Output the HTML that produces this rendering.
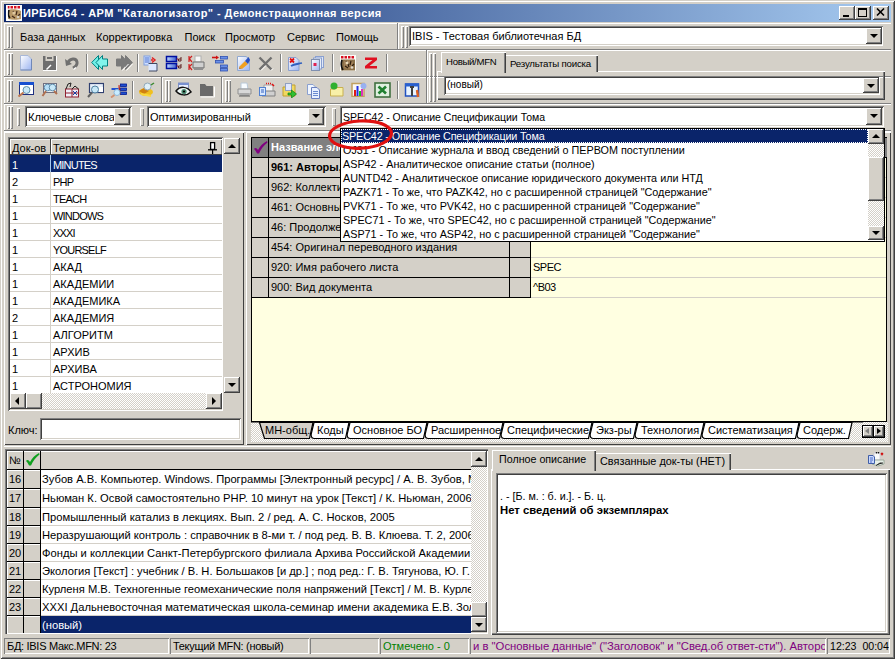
<!DOCTYPE html><html><head><meta charset="utf-8"><style>
*{box-sizing:border-box}
html,body{margin:0;padding:0}
body{width:895px;height:659px;overflow:hidden;background:#D4D0C8;font-family:"Liberation Sans",sans-serif;font-size:11px;position:relative;color:#000}
.a{position:absolute}
.t{white-space:pre;line-height:1;-webkit-font-smoothing:antialiased}
.rz{box-shadow:inset -1px -1px #404040,inset 1px 1px #fff,inset -2px -2px #808080,inset 2px 2px #D4D0C8;background:#D4D0C8}
.sk{box-shadow:inset 1px 1px #808080,inset -1px -1px #fff,inset 2px 2px #404040,inset -2px -2px #D4D0C8;background:#fff}
.tr{box-shadow:inset 1px 1px #fff,inset -1px -1px #808080}
.ts{box-shadow:inset 1px 1px #808080,inset -1px -1px #fff}
.dith{background:repeating-conic-gradient(#fff 0 25%,#D4D0C8 0 50%) 0 0/2px 2px}
.grip{width:3px;box-shadow:inset 1px 1px #fff,inset -1px -1px #808080}
.vsep{width:2px;border-left:1px solid #808080;border-right:1px solid #fff}
.hline{height:2px;border-top:1px solid #808080;border-bottom:1px solid #fff}
.ls{letter-spacing:-0.8px}.arr{width:0;height:0;border-left:4px solid transparent;border-right:4px solid transparent;border-top:4px solid #000}.arru{width:0;height:0;border-left:4px solid transparent;border-right:4px solid transparent;border-bottom:4px solid #000}.arrl{width:0;height:0;border-top:4px solid transparent;border-bottom:4px solid transparent;border-right:4px solid #000}.arrr{width:0;height:0;border-top:4px solid transparent;border-bottom:4px solid transparent;border-left:4px solid #000}</style></head><body><div class="a " style="left:0px;top:0px;width:895px;height:659px;box-shadow:inset 1px 1px #D4D0C8,inset -1px -1px #404040,inset 2px 2px #fff,inset -2px -2px #808080"></div>
<div class="a " style="left:4px;top:4px;width:887px;height:18px;background:linear-gradient(to right,#0A246A,#A6CAF0)"></div>
<svg class="a" style="left:6px;top:5px" width="16" height="16" viewBox="0 0 16 16"><rect x="0" y="0" width="16" height="16" fill="#fbfbf8"/><path d="M1 1h2.5v2.5h-2.5zM4.5 1h2.5v2.5h-2.5zM8 1h2.5v2.5h-2.5zM11.5 1h2.5v2.5h-2.5z" fill="#d81020"/><path d="M2 5 C4 4,12 4,15 6 L15 14 C12 15,6 15,2 14Z" fill="#b89868"/><path d="M3 5 C2 8,2 11,4 13" stroke="#101010" stroke-width="1.6" fill="none"/><path d="M7 6 L9 9 M11 6 L10 10 M6 11 L9 13 M12 11 L14 9" stroke="#402818" stroke-width="1.2"/><circle cx="8" cy="8" r="1.6" fill="#e0c8a0"/><circle cx="12" cy="12" r="1.3" fill="#d8d0c0"/><path d="M1 1 V15 H3" stroke="#fff" stroke-width="1.5" fill="none"/></svg>
<div class="a t " style="left:23px;top:7.69px;font-size:11px;color:#fff;font-weight:bold;letter-spacing:0.42px">ИРБИС64 - АРМ &quot;Каталогизатор&quot; - Демонстрационная версия</div>
<div class="a rz" style="left:839px;top:6px;width:16px;height:14px;"></div>
<div class="a rz" style="left:855px;top:6px;width:16px;height:14px;"></div>
<div class="a rz" style="left:873px;top:6px;width:16px;height:14px;"></div>
<div class="a" style="left:843px;top:15px;width:6px;height:2px;background:#000"></div>
<div class="a" style="left:858px;top:8px;width:9px;height:9px;border:1px solid #000;border-top-width:2px"></div>
<svg class="a" style="left:876px;top:8px" width="10" height="9" viewBox="0 0 10 9"><path d="M1 0.5 L8 7.5 M8 0.5 L1 7.5" stroke="#000" stroke-width="1.6"/></svg>
<div class="a" style="left:4px;top:23px;width:887px;height:1px;background:#fff"></div>
<div class="a" style="left:4px;top:49px;width:887px;height:2px;border-top:1px solid #808080;border-bottom:1px solid #fff"></div>
<div class="a" style="left:4px;top:76px;width:887px;height:2px;border-top:1px solid #808080;border-bottom:1px solid #fff"></div>
<div class="a" style="left:4px;top:103px;width:887px;height:2px;border-top:1px solid #808080;border-bottom:1px solid #fff"></div>
<div class="a" style="left:4px;top:130px;width:887px;height:2px;border-top:1px solid #808080;border-bottom:1px solid #fff"></div>
<div class="a" style="left:4px;top:24px;width:1px;height:25px;background:#fff"></div>
<div class="a" style="left:4px;top:51px;width:1px;height:25px;background:#fff"></div>
<div class="a" style="left:4px;top:78px;width:1px;height:25px;background:#fff"></div>
<div class="a" style="left:4px;top:105px;width:1px;height:25px;background:#fff"></div>
<div class="a" style="left:397px;top:23px;width:2px;height:26px;border-left:1px solid #808080;border-right:1px solid #fff"></div>
<div class="a" style="left:426px;top:50px;width:2px;height:26px;border-left:1px solid #808080;border-right:1px solid #fff"></div>
<div class="a" style="left:426px;top:77px;width:2px;height:26px;border-left:1px solid #808080;border-right:1px solid #fff"></div>
<div class="a grip" style="left:7px;top:26px;width:3px;height:22px;"></div>
<div class="a grip" style="left:10px;top:26px;width:3px;height:22px;"></div>
<div class="a t " style="left:20px;top:31.69px;font-size:11px;">База данных</div>
<div class="a t " style="left:96px;top:31.69px;font-size:11px;">Корректировка</div>
<div class="a t " style="left:184.5px;top:31.69px;font-size:11px;">Поиск</div>
<div class="a t " style="left:225px;top:31.69px;font-size:11px;">Просмотр</div>
<div class="a t " style="left:287px;top:31.69px;font-size:11px;">Сервис</div>
<div class="a t " style="left:336px;top:31.69px;font-size:11px;">Помощь</div>
<div class="a grip" style="left:401px;top:26px;width:3px;height:22px;"></div>
<div class="a grip" style="left:405px;top:26px;width:3px;height:22px;"></div>
<div class="a sk" style="left:409px;top:26px;width:474px;height:20px;"></div>
<div class="a t " style="left:412px;top:31.19px;font-size:11px;">IBIS - Тестовая библиотечная БД</div>
<div class="a rz" style="left:866px;top:28px;width:16px;height:16px;"></div>
<div class="a arr" style="left:870px;top:34px"></div>
<div class="a grip" style="left:7px;top:53px;width:3px;height:22px;"></div>
<div class="a grip" style="left:10px;top:53px;width:3px;height:22px;"></div>
<div class="a grip" style="left:7px;top:80px;width:3px;height:22px;"></div>
<div class="a grip" style="left:10px;top:80px;width:3px;height:22px;"></div>
<svg width="0" height="0" style="position:absolute"><defs><linearGradient id="pg" x1="0" y1="0" x2="1" y2="1"><stop offset="0" stop-color="#ffffff"/><stop offset="1" stop-color="#9cb4f0"/></linearGradient><linearGradient id="bb" x1="0" y1="0" x2="1" y2="0"><stop offset="0" stop-color="#c0d8ff"/><stop offset="1" stop-color="#4060d0"/></linearGradient></defs></svg>
<svg class="a" style="left:19px;top:54px" width="14" height="17" viewBox="0 0 14 17"><path d="M1.5 1.5 H9 L12.5 5 V16 H1.5Z" fill="url(#pg)" stroke="#a8b8d8"/><path d="M12.5 5 V16 H1.5" stroke="#7088b8" fill="none"/></svg>
<svg class="a" style="left:42px;top:55px" width="15" height="16" viewBox="0 0 15 16"><rect x="1" y="1" width="13" height="14" fill="#6e6e6e"/><rect x="3.5" y="1" width="8" height="5" fill="#d4d0c8"/><rect x="5" y="2" width="5" height="2" fill="#6e6e6e"/><path d="M4.5 14.5 L9 10" stroke="#fff" stroke-width="1.5"/><path d="M1 15.5 H15 M14.5 1 V16" stroke="#fff"/></svg>
<svg class="a" style="left:64px;top:55px" width="16" height="16" viewBox="0 0 16 16"><path d="M4 7.5 C6 3.5,12 2.5,13 7 C13.5 10,11 12,9 13" stroke="#707070" stroke-width="3" fill="none"/><path d="M1 4 L2 11 L8 9Z" fill="#707070"/><path d="M9.5 14.5 L12 12.5" stroke="#fff" stroke-width="1.3"/></svg>
<svg class="a" style="left:91px;top:54px" width="18" height="17" viewBox="0 0 18 17"><path d="M0.7 8.5 L7.5 1.5 V15.5Z" fill="#70f0e8" stroke="#008080"/><path d="M5 8.5 L11.5 1.5 V5 H16.5 V12 H11.5 V15.5Z" fill="#80f4ec" stroke="#008080"/></svg>
<svg class="a" style="left:115px;top:54px" width="18" height="17" viewBox="0 0 18 17"><path d="M17.3 8.5 L10.5 1.5 V15.5Z" fill="#7a7a7a" stroke="#7a7a7a"/><path d="M13 8.5 L6.5 1.5 V5 H1.5 V12 H6.5 V15.5Z" fill="#7a7a7a" stroke="#7a7a7a"/><path d="M7.5 16.5 L13.5 10 M11.5 16.5 L17.5 10" stroke="#fff"/></svg>
<svg class="a" style="left:143px;top:55px" width="15" height="17" viewBox="0 0 15 17"><rect x="1" y="1" width="6" height="9" fill="#d0e0ff" stroke="#80a0e0"/><path d="M2 3h4M2 5h4M2 7h4" stroke="#4a70d0"/><path d="M9 2.5 L12 5 L9 7.5 M10 5 H8" stroke="#e02020" stroke-width="1.5" fill="none"/><rect x="5.5" y="8.5" width="9" height="7.5" fill="#dce8ff"/><path d="M5.5 8.5 H14 V16 H6" stroke="#404860" fill="none"/></svg>
<svg class="a" style="left:165px;top:55px" width="18" height="15" viewBox="0 0 18 15"><rect x="1.5" y="1.5" width="10" height="5" fill="url(#bb)" stroke="#0010a0" stroke-width="1.5"/><rect x="1.5" y="8.5" width="10" height="5" fill="url(#bb)" stroke="#0010a0" stroke-width="1.5"/><path d="M11.5 4 H13 M11.5 11 H13" stroke="#a02020"/><path d="M16 2 V6 H13.5 V4 H16 M16 9 V13 H13.5 V11 H16" stroke="#602020" fill="none"/></svg>
<svg class="a" style="left:188px;top:55px" width="17" height="16" viewBox="0 0 17 16"><path d="M1 1 V7 M1 4 L4 1 M1.5 4 L4 7 M1 9 V15 M1 12 L4 9 M1.5 12 L4 15" stroke="#d02020" stroke-width="1.2" fill="none"/><rect x="7" y="1" width="6" height="6" fill="#f8f8f8" stroke="#b0b0b0"/><path d="M5 7 H16 V13 H5Z" fill="#d0d0d0" stroke="#707070"/><rect x="6" y="12" width="9" height="3" fill="#909090"/></svg>
<svg class="a" style="left:211px;top:55px" width="17" height="17" viewBox="0 0 17 17"><path d="M1 2.5 H6" stroke="#d01010" stroke-width="1.6"/><path d="M5 0.5 L8 2.5 L5 4.5Z" fill="#d01010"/><rect x="9.5" y="1.5" width="7" height="2.5" fill="#6a90e8" stroke="#3050b0" stroke-width="0.8"/><rect x="4.5" y="5.5" width="8" height="2.5" fill="#6a90e8" stroke="#3050b0" stroke-width="0.8"/><rect x="9.5" y="10" width="7" height="2.5" fill="#6a90e8" stroke="#3050b0" stroke-width="0.8"/><rect x="9.5" y="13.5" width="7" height="2.5" fill="#6a90e8" stroke="#3050b0" stroke-width="0.8"/></svg>
<svg class="a" style="left:236px;top:55px" width="15" height="16" viewBox="0 0 15 16"><path d="M1.5 1.5 H10 L13.5 4 V15.5 H1.5Z" fill="url(#pg)" stroke="#90a8d0"/><path d="M3 12 L9 6 L12 9 L6 14Z" fill="#f0a020"/><path d="M3 12 L6 14 L3 14Z" fill="#c08040"/><path d="M9 6 L12.5 2 L14 5 L12 9Z" fill="#2850c0"/></svg>
<svg class="a" style="left:258px;top:56px" width="16" height="15" viewBox="0 0 16 15"><path d="M1.5 1.5 L13.5 13.5 M13.5 1.5 L1.5 13.5" stroke="#707070" stroke-width="2.4"/><path d="M3 14.5 L8 9.5 M13 14.5 L15 12.5" stroke="#fff"/></svg>
<svg class="a" style="left:287px;top:55px" width="16" height="16" viewBox="0 0 16 16"><path d="M1.5 2.5 H9 L12 5.5 V15.5 H1.5Z" fill="url(#pg)" stroke="#8aa0d0"/><path d="M3 3.5 L7 7.5 M7 3.5 L3 7.5" stroke="#e01010" stroke-width="1.8"/><path d="M4 11 C7 9,11 9,15 8" stroke="#3060c0" stroke-width="1.8" fill="none"/></svg>
<svg class="a" style="left:310px;top:55px" width="14" height="16" viewBox="0 0 14 16"><rect x="5.5" y="1.5" width="8" height="11" fill="#e0e8f8" stroke="#8aa0d0"/><rect x="3.5" y="3" width="8" height="11" fill="#e8eef8" stroke="#8aa0d0"/><rect x="1.5" y="4.5" width="8" height="11" fill="url(#pg)" stroke="#8090b0"/><rect x="3.5" y="8" width="3" height="3" fill="#e02050"/></svg>
<svg class="a" style="left:340px;top:55px" width="16" height="16" viewBox="0 0 16 16"><rect x="0" y="0" width="16" height="16" fill="#fbfbf8"/><path d="M1 1h2.5v2.5h-2.5zM4.5 1h2.5v2.5h-2.5zM8 1h2.5v2.5h-2.5zM11.5 1h2.5v2.5h-2.5z" fill="#d81020"/><path d="M1 4.5 H15 V15.5 H1Z" fill="#8a7048"/><path d="M4 6 C6 5,10 5,13 7 L13 13 C11 14,7 14,4 13Z" fill="#a08058"/><path d="M2 5 C1 8,1 12,3 15" stroke="#101010" stroke-width="1.6" fill="none"/><path d="M6 6 L8 9 M11 6 L10 10 M5 11 L8 13 M12 11 L14 9 M8 9 L9 12" stroke="#302010" stroke-width="1.2"/><circle cx="7" cy="8" r="1.4" fill="#e8d8b8"/><circle cx="12" cy="12.5" r="1.3" fill="#e0d8c8"/></svg>
<svg class="a" style="left:364px;top:57px" width="14" height="12" viewBox="0 0 14 12"><path d="M1 0.5 H13 V3 L5.5 9 H13 V11.5 H1 V9 L8.5 3 H1Z" fill="#e01020"/></svg>
<svg class="a" style="left:17px;top:81px" width="17" height="16" viewBox="0 0 17 16"><rect x="2.5" y="1.5" width="14" height="12" fill="#fff" stroke="#203080"/><rect x="2" y="1" width="15" height="3" fill="#1850d0"/><circle cx="9.5" cy="9" r="3.5" fill="#c8e8f8" stroke="#6090a8"/><path d="M6.5 11.5 L1.5 15.5" stroke="#c07850" stroke-width="2.2"/></svg>
<svg class="a" style="left:41px;top:82px" width="17" height="15" viewBox="0 0 17 15"><rect x="2.5" y="1.5" width="13" height="9" fill="#e8eef0" stroke="#707080"/><circle cx="6.5" cy="5.5" r="3.3" fill="#b8e0f8" stroke="#6090b0"/><circle cx="11.5" cy="5.5" r="3.3" fill="#c8e8f8" stroke="#6090b0"/><path d="M5 9 L1.5 14 M13 9 L16 12" stroke="#b07050" stroke-width="2"/></svg>
<svg class="a" style="left:64px;top:82px" width="16" height="16" viewBox="0 0 16 16"><rect x="1.5" y="7" width="13" height="8" fill="#f0f0f8" stroke="#902030"/><path d="M1.5 11 H14.5 M8 7 V15" stroke="#902030"/><path d="M2 7 L4 2 L7 1 L6 5" stroke="#202020" fill="none"/><path d="M8 7 L11 4 L14.5 7" stroke="#202020" fill="none"/><path d="M9 9 L13 13 M13 9 L9 13" stroke="#2040a0"/></svg>
<svg class="a" style="left:87px;top:82px" width="17" height="16" viewBox="0 0 17 16"><rect x="2.5" y="1.5" width="14" height="9" fill="#e8f0fb" stroke="#304070" stroke-width="1.2"/><rect x="12" y="5" width="4" height="5" fill="#fff"/><circle cx="8" cy="7.5" r="3.5" fill="#c8e8f8" stroke="#5080a0"/><path d="M5 10.5 L1 15" stroke="#606060" stroke-width="2"/></svg>
<svg class="a" style="left:109px;top:83px" width="18" height="15" viewBox="0 0 18 15"><rect x="11.5" y="1" width="6" height="2.5" fill="#2050d0" stroke="#001890" stroke-width="0.8"/><rect x="11.5" y="5" width="6" height="2.5" fill="#2050d0" stroke="#001890" stroke-width="0.8"/><rect x="11.5" y="9" width="6" height="2.5" fill="#2050d0" stroke="#001890" stroke-width="0.8"/><path d="M10 2 V10.5 H11.5 M10 6 H11.5" stroke="#d02020"/><rect x="2.5" y="5" width="7" height="2" fill="#2050d0"/><circle cx="8" cy="9.5" r="3" fill="#c8ecff" stroke="#90b8d8"/><path d="M5.5 12 L2 14.5" stroke="#d09070" stroke-width="1.8"/></svg>
<svg class="a" style="left:137px;top:82px" width="18" height="15" viewBox="0 0 18 15"><ellipse cx="9" cy="10" rx="7" ry="4" fill="#f0c020"/><path d="M2 9 L7 6 L12 9 L7 12Z" fill="#d08010"/><path d="M4 12 L14 14" stroke="#f8d840" stroke-width="2"/><circle cx="10.5" cy="4.5" r="3.5" fill="#e0f0f8" stroke="#90a8b8"/><path d="M14 3 L17 1" stroke="#3a8a30" stroke-width="1.5"/></svg>
<svg class="a" style="left:175px;top:82px" width="17" height="16" viewBox="0 0 17 16"><rect x="3.5" y="1" width="10" height="7" fill="#e8eeff" stroke="#8090c0"/><rect x="3.5" y="1" width="10" height="2" fill="#7890d0"/><path d="M1 9 C5 4,12 4,16 10 C12 14,5 14,1 9Z" fill="#f0f8f8" stroke="#101010" stroke-width="1.5"/><circle cx="9" cy="9.5" r="2.6" fill="#4a8a70"/><circle cx="9" cy="9.5" r="1.1" fill="#000"/></svg>
<svg class="a" style="left:199px;top:82px" width="16" height="16" viewBox="0 0 16 16"><path d="M1 2 H6 L7.5 4 H14 V14 H1Z" fill="#6a6a6a"/><path d="M1.5 15 H15.5 V4.5" stroke="#fff" fill="none"/></svg>
<svg class="a" style="left:237px;top:82px" width="15" height="16" viewBox="0 0 15 16"><path d="M4 1 H10 L11 7 H4Z" fill="#f8fcff" stroke="#b8c8d8"/><path d="M1 7 H14 V12 H1Z" fill="#d8d8d8" stroke="#909090"/><rect x="3" y="11" width="9" height="3" fill="#a8a8a8"/><path d="M2 14 H13" stroke="#606060"/></svg>
<svg class="a" style="left:258px;top:82px" width="18" height="16" viewBox="0 0 18 16"><path d="M6 3 H15 V13 H6Z" fill="#f0f0f0" stroke="#a0a0a0"/><path d="M4 9 H17 V14 H4Z" fill="#d0d0d0" stroke="#808080"/><rect x="1.5" y="5.5" width="6" height="8" fill="#d8e8ff" stroke="#5080d0"/><path d="M3 8h3M3 10h3" stroke="#3060c0"/><path d="M8 1.5h1M10 1.5h1M12 1.5h1M14 2 L16 4" stroke="#e01010" stroke-width="1.5"/></svg>
<svg class="a" style="left:282px;top:82px" width="15" height="16" viewBox="0 0 15 16"><path d="M1 5 H5 L6 3 H13 V14 H1Z" fill="#f0d860" stroke="#c0a030"/><rect x="3.5" y="1.5" width="6" height="7" fill="#e0e8ff" stroke="#90a0c0"/><path d="M6 11 H9.5 V8 L14.5 12 L9.5 16 V13 H6Z" fill="#30c030" stroke="#108010" stroke-width="0.7"/></svg>
<svg class="a" style="left:306px;top:83px" width="15" height="16" viewBox="0 0 15 16"><path d="M1.5 1.5 H7 L9 3.5 V11.5 H1.5Z" fill="#f0f6ff" stroke="#8aa0d0"/><path d="M5.5 4.5 H11 L13.5 7 V15.5 H5.5Z" fill="#e8f0ff" stroke="#6a80c0"/><path d="M7 8.5h5M7 10.5h5M7 12.5h5" stroke="#6a8ad0"/></svg>
<svg class="a" style="left:329px;top:82px" width="15" height="15" viewBox="0 0 15 15"><path d="M1.5 7 H6 L7 5.5 H14 V14 H1.5Z" fill="#f8f0a8" stroke="#c8b050"/><circle cx="5" cy="4" r="3.5" fill="#30b030"/></svg>
<svg class="a" style="left:351px;top:82px" width="16" height="15" viewBox="0 0 16 15"><rect x="1" y="1.5" width="12" height="13" fill="#f8f8f8" stroke="#c0a060" stroke-width="1.5"/><rect x="3" y="8" width="2" height="6" fill="#e01818"/><rect x="5.5" y="4" width="2" height="10" fill="#2030e0"/><rect x="8" y="9" width="2" height="5" fill="#20c020"/><rect x="10" y="7" width="2" height="7" fill="#e030c0"/><circle cx="12.5" cy="4" r="3" fill="#98b0f0"/></svg>
<svg class="a" style="left:374px;top:82px" width="17" height="16" viewBox="0 0 17 16"><rect x="1" y="1" width="15" height="14" fill="#e0f0e0" stroke="#407040" stroke-width="1.6"/><path d="M4.5 4.5 L12 11.5 M12 4.5 L4.5 11.5" stroke="#208030" stroke-width="2.6"/></svg>
<svg class="a" style="left:404px;top:82px" width="17" height="16" viewBox="0 0 17 16"><rect x="1.5" y="2" width="13" height="12" fill="#e8f4ff" stroke="#2050c0" stroke-width="1.5"/><rect x="1" y="1.5" width="14" height="3" fill="#2860d0"/><path d="M6 5 H10 M8 5 V14" stroke="#404040" stroke-width="2"/><path d="M13 8 L14 15" stroke="#e06020" stroke-width="2.4"/></svg>
<div class="a vsep" style="left:86px;top:54px;width:2px;height:18px;"></div>
<div class="a vsep" style="left:137px;top:54px;width:2px;height:18px;"></div>
<div class="a vsep" style="left:280px;top:54px;width:2px;height:18px;"></div>
<div class="a vsep" style="left:332px;top:54px;width:2px;height:18px;"></div>
<div class="a vsep" style="left:386px;top:54px;width:2px;height:18px;"></div>
<div class="a vsep" style="left:132px;top:81px;width:2px;height:18px;"></div>
<div class="a" style="left:161px;top:77px;width:2px;height:26px;border-left:1px solid #808080;border-right:1px solid #fff"></div>
<div class="a grip" style="left:165px;top:80px;width:3px;height:22px;"></div>
<div class="a grip" style="left:168px;top:80px;width:3px;height:22px;"></div>
<div class="a" style="left:221px;top:77px;width:2px;height:26px;border-left:1px solid #808080;border-right:1px solid #fff"></div>
<div class="a grip" style="left:225px;top:80px;width:3px;height:22px;"></div>
<div class="a grip" style="left:228px;top:80px;width:3px;height:22px;"></div>
<div class="a vsep" style="left:397px;top:81px;width:2px;height:18px;"></div>
<div class="a grip" style="left:429px;top:53px;width:3px;height:49px;"></div>
<div class="a grip" style="left:433px;top:53px;width:3px;height:49px;"></div>
<div class="a " style="left:437px;top:71px;width:448px;height:29px;box-shadow:inset 1px 1px #fff,inset -1px -1px #404040,inset -2px -2px #808080"></div>
<div class="a " style="left:505px;top:55px;width:93px;height:17px;box-shadow:inset 1px 1px #fff,inset -1px 0 #404040,inset -2px 0 #808080;background:#D4D0C8"></div>
<div class="a t " style="left:510px;top:59.29px;font-size:9.7px;letter-spacing:-0.2px">Результаты поиска</div>
<div class="a " style="left:441px;top:52px;width:65px;height:21px;box-shadow:inset 1px 1px #fff,inset -1px 0 #404040,inset -2px 0 #808080;background:#D4D0C8"></div>
<div class="a t " style="left:446px;top:56.87px;font-size:9.6px;letter-spacing:-0.3px">Новый/MFN</div>
<div class="a sk" style="left:444px;top:76px;width:436px;height:19px;"></div>
<div class="a t " style="left:447px;top:79.73px;font-size:10px;">(новый)</div>
<div class="a rz" style="left:863px;top:78px;width:16px;height:15px;"></div>
<div class="a arr" style="left:867px;top:84px"></div>
<div class="a grip" style="left:7px;top:106px;width:3px;height:23px;"></div>
<div class="a grip" style="left:10px;top:106px;width:3px;height:23px;"></div>
<div class="a grip" style="left:17px;top:108px;width:3px;height:18px;"></div>
<div class="a sk" style="left:25px;top:106px;width:107px;height:21px;"></div>
<div class="a t " style="left:28px;top:111.52px;font-size:11.2px;">Ключевые слова</div>
<div class="a rz" style="left:114px;top:108px;width:16px;height:17px;"></div>
<div class="a arr" style="left:118px;top:114px"></div>
<div class="a grip" style="left:140px;top:108px;width:4px;height:18px;width:4px"></div>
<div class="a sk" style="left:147px;top:106px;width:179px;height:21px;"></div>
<div class="a t " style="left:150px;top:111.69px;font-size:11px;">Оптимизированный</div>
<div class="a rz" style="left:308px;top:108px;width:16px;height:17px;"></div>
<div class="a arr" style="left:312px;top:114px"></div>
<div class="a grip" style="left:332px;top:108px;width:4px;height:18px;width:4px"></div>
<div class="a sk" style="left:340px;top:106px;width:544px;height:21px;"></div>
<div class="a t " style="left:343px;top:112.11px;font-size:10.5px;">SPEC42 - Описание Спецификации Тома</div>
<div class="a rz" style="left:866px;top:108px;width:16px;height:17px;"></div>
<div class="a arr" style="left:870px;top:114px"></div>
<div class="a " style="left:4px;top:132px;width:240px;height:313px;box-shadow:inset 1px 1px #fff,inset -1px -1px #404040"></div>
<div class="a " style="left:8px;top:137px;width:215px;height:274px;box-shadow:inset 1px 1px #808080,inset -1px -1px #fff,inset 2px 2px #404040,inset -2px -2px #D4D0C8;background:#D4D0C8"></div>
<div class="a " style="left:10px;top:139px;width:212px;height:16px;background:#D4D0C8"></div>
<div class="a tr" style="left:10px;top:139px;width:41px;height:16px;"></div>
<div class="a tr" style="left:51px;top:139px;width:171px;height:16px;"></div>
<div class="a" style="left:10px;top:154px;width:212px;height:1px;background:#404040"></div>
<div class="a" style="left:50px;top:139px;width:1px;height:16px;background:#404040"></div>
<div class="a t " style="left:12px;top:142.69px;font-size:11px;">Док-ов</div>
<div class="a t " style="left:53px;top:142.69px;font-size:11px;">Термины</div>
<svg class="a" style="left:207px;top:141px" width="11" height="14" viewBox="0 0 11 14"><rect x="3.6" y="1.6" width="4" height="6.8" fill="#fff" stroke="#000" stroke-width="1.3"/><path d="M1 8.8 H10" stroke="#000" stroke-width="1.3"/><path d="M5.6 8.8 V13" stroke="#000" stroke-width="1.2"/></svg>
<div class="a " style="left:10px;top:155px;width:212px;height:17px;background:#0A246A"></div>
<div class="a" style="left:50px;top:155px;width:1px;height:17px;background:#A6CAF0"></div>
<div class="a t " style="left:12px;top:159.99px;font-size:11px;color:#fff">1</div>
<div class="a t ls" style="left:53px;top:159.99px;font-size:11px;color:#fff">MINUTES</div>
<div class="a " style="left:10px;top:172px;width:212px;height:17px;background:#fff"></div>
<div class="a" style="left:50px;top:172px;width:1px;height:17px;background:#D4D0C8"></div>
<div class="a t " style="left:12px;top:176.99px;font-size:11px;">2</div>
<div class="a t ls" style="left:53px;top:176.99px;font-size:11px;">PHP</div>
<div class="a " style="left:10px;top:189px;width:212px;height:17px;background:#fff"></div>
<div class="a" style="left:10px;top:189px;width:212px;height:1px;background:#D4D0C8"></div>
<div class="a" style="left:50px;top:189px;width:1px;height:17px;background:#D4D0C8"></div>
<div class="a t " style="left:12px;top:193.99px;font-size:11px;">1</div>
<div class="a t ls" style="left:53px;top:193.99px;font-size:11px;">TEACH</div>
<div class="a " style="left:10px;top:206px;width:212px;height:17px;background:#fff"></div>
<div class="a" style="left:10px;top:206px;width:212px;height:1px;background:#D4D0C8"></div>
<div class="a" style="left:50px;top:206px;width:1px;height:17px;background:#D4D0C8"></div>
<div class="a t " style="left:12px;top:210.99px;font-size:11px;">1</div>
<div class="a t ls" style="left:53px;top:210.99px;font-size:11px;">WINDOWS</div>
<div class="a " style="left:10px;top:223px;width:212px;height:17px;background:#fff"></div>
<div class="a" style="left:10px;top:223px;width:212px;height:1px;background:#D4D0C8"></div>
<div class="a" style="left:50px;top:223px;width:1px;height:17px;background:#D4D0C8"></div>
<div class="a t " style="left:12px;top:227.99px;font-size:11px;">1</div>
<div class="a t ls" style="left:53px;top:227.99px;font-size:11px;">XXXI</div>
<div class="a " style="left:10px;top:240px;width:212px;height:17px;background:#fff"></div>
<div class="a" style="left:10px;top:240px;width:212px;height:1px;background:#D4D0C8"></div>
<div class="a" style="left:50px;top:240px;width:1px;height:17px;background:#D4D0C8"></div>
<div class="a t " style="left:12px;top:244.99px;font-size:11px;">1</div>
<div class="a t ls" style="left:53px;top:244.99px;font-size:11px;">YOURSELF</div>
<div class="a " style="left:10px;top:257px;width:212px;height:17px;background:#fff"></div>
<div class="a" style="left:10px;top:257px;width:212px;height:1px;background:#D4D0C8"></div>
<div class="a" style="left:50px;top:257px;width:1px;height:17px;background:#D4D0C8"></div>
<div class="a t " style="left:12px;top:261.99px;font-size:11px;">1</div>
<div class="a t " style="left:53px;top:261.99px;font-size:11px;">АКАД</div>
<div class="a " style="left:10px;top:274px;width:212px;height:17px;background:#fff"></div>
<div class="a" style="left:10px;top:274px;width:212px;height:1px;background:#D4D0C8"></div>
<div class="a" style="left:50px;top:274px;width:1px;height:17px;background:#D4D0C8"></div>
<div class="a t " style="left:12px;top:278.99px;font-size:11px;">1</div>
<div class="a t " style="left:53px;top:278.99px;font-size:11px;">АКАДЕМИИ</div>
<div class="a " style="left:10px;top:291px;width:212px;height:17px;background:#fff"></div>
<div class="a" style="left:10px;top:291px;width:212px;height:1px;background:#D4D0C8"></div>
<div class="a" style="left:50px;top:291px;width:1px;height:17px;background:#D4D0C8"></div>
<div class="a t " style="left:12px;top:295.99px;font-size:11px;">1</div>
<div class="a t " style="left:53px;top:295.99px;font-size:11px;">АКАДЕМИКА</div>
<div class="a " style="left:10px;top:308px;width:212px;height:17px;background:#fff"></div>
<div class="a" style="left:10px;top:308px;width:212px;height:1px;background:#D4D0C8"></div>
<div class="a" style="left:50px;top:308px;width:1px;height:17px;background:#D4D0C8"></div>
<div class="a t " style="left:12px;top:312.99px;font-size:11px;">2</div>
<div class="a t " style="left:53px;top:312.99px;font-size:11px;">АКАДЕМИЯ</div>
<div class="a " style="left:10px;top:325px;width:212px;height:17px;background:#fff"></div>
<div class="a" style="left:10px;top:325px;width:212px;height:1px;background:#D4D0C8"></div>
<div class="a" style="left:50px;top:325px;width:1px;height:17px;background:#D4D0C8"></div>
<div class="a t " style="left:12px;top:329.99px;font-size:11px;">1</div>
<div class="a t " style="left:53px;top:329.99px;font-size:11px;">АЛГОРИТМ</div>
<div class="a " style="left:10px;top:342px;width:212px;height:17px;background:#fff"></div>
<div class="a" style="left:10px;top:342px;width:212px;height:1px;background:#D4D0C8"></div>
<div class="a" style="left:50px;top:342px;width:1px;height:17px;background:#D4D0C8"></div>
<div class="a t " style="left:12px;top:346.99px;font-size:11px;">1</div>
<div class="a t " style="left:53px;top:346.99px;font-size:11px;">АРХИВ</div>
<div class="a " style="left:10px;top:359px;width:212px;height:17px;background:#fff"></div>
<div class="a" style="left:10px;top:359px;width:212px;height:1px;background:#D4D0C8"></div>
<div class="a" style="left:50px;top:359px;width:1px;height:17px;background:#D4D0C8"></div>
<div class="a t " style="left:12px;top:363.99px;font-size:11px;">1</div>
<div class="a t " style="left:53px;top:363.99px;font-size:11px;">АРХИВА</div>
<div class="a " style="left:10px;top:376px;width:212px;height:17px;background:#fff"></div>
<div class="a" style="left:10px;top:376px;width:212px;height:1px;background:#D4D0C8"></div>
<div class="a" style="left:50px;top:376px;width:1px;height:17px;background:#D4D0C8"></div>
<div class="a t " style="left:12px;top:380.99px;font-size:11px;">1</div>
<div class="a t " style="left:53px;top:380.99px;font-size:11px;">АСТРОНОМИЯ</div>
<div class="a rz" style="left:224px;top:138px;width:16px;height:16px;"></div>
<div class="a arru" style="left:228px;top:144px"></div>
<div class="a rz" style="left:224px;top:377px;width:16px;height:16px;"></div>
<div class="a arr" style="left:228px;top:383px"></div>
<div class="a dith" style="left:10px;top:393px;width:212px;height:16px;"></div>
<div class="a rz" style="left:10px;top:393px;width:16px;height:16px;"></div>
<div class="a arrl" style="left:15px;top:397px"></div>
<div class="a rz" style="left:26px;top:393px;width:16px;height:16px;"></div>
<div class="a rz" style="left:206px;top:393px;width:16px;height:16px;"></div>
<div class="a arrr" style="left:212px;top:397px"></div>
<div class="a t " style="left:8px;top:424.69px;font-size:11px;">Ключ:</div>
<div class="a sk" style="left:40px;top:418px;width:201px;height:22px;"></div>
<div class="a " style="left:246px;top:132px;width:645px;height:313px;box-shadow:inset 1px 1px #fff,inset -1px -1px #404040"></div>
<div class="a " style="left:251px;top:137px;width:636px;height:285px;background:#FFFFE1;border:1px solid #000"></div>
<div class="a dith" style="left:251px;top:422px;width:637px;height:20px;"></div>
<div class="a " style="left:252px;top:138px;width:635px;height:20px;background:#808080"></div>
<div class="a" style="left:252px;top:157px;width:635px;height:1px;background:#000"></div>
<svg class="a" style="left:253px;top:140px" width="15" height="15" viewBox="0 0 15 15"><path d="M1 9 C2 7,4 8,5 10 C7 6,10 3,14 1 L14.5 2.5 C11 5,8 9,6 13.5 L4 13.5 C3 11,2 10,1 9Z" fill="#800080"/></svg>
<div class="a t " style="left:271px;top:142.19px;font-size:11px;color:#fff;font-weight:bold">Название элемента</div>
<div class="a " style="left:252px;top:158px;width:278px;height:20px;background:#D4D0C8"></div>
<div class="a" style="left:252px;top:177px;width:278px;height:1px;background:#000"></div>
<div class="a" style="left:531px;top:177px;width:355px;height:1px;background:#D4D0C8"></div>
<div class="a t " style="left:271px;top:161.99px;font-size:11px;font-weight:bold">961: Авторы, Редакторы</div>
<div class="a " style="left:252px;top:178px;width:278px;height:20px;background:#D4D0C8"></div>
<div class="a" style="left:252px;top:197px;width:278px;height:1px;background:#000"></div>
<div class="a" style="left:531px;top:197px;width:355px;height:1px;background:#D4D0C8"></div>
<div class="a t " style="left:271px;top:181.99px;font-size:11px;">962: Коллективы</div>
<div class="a " style="left:252px;top:198px;width:278px;height:20px;background:#D4D0C8"></div>
<div class="a" style="left:252px;top:217px;width:278px;height:1px;background:#000"></div>
<div class="a" style="left:531px;top:217px;width:355px;height:1px;background:#D4D0C8"></div>
<div class="a t " style="left:271px;top:201.99px;font-size:11px;">461: Основные сведения</div>
<div class="a " style="left:252px;top:218px;width:278px;height:20px;background:#D4D0C8"></div>
<div class="a" style="left:252px;top:237px;width:278px;height:1px;background:#000"></div>
<div class="a" style="left:531px;top:237px;width:355px;height:1px;background:#D4D0C8"></div>
<div class="a t " style="left:271px;top:221.99px;font-size:11px;">46: Продолжение</div>
<div class="a " style="left:252px;top:238px;width:278px;height:20px;background:#D4D0C8"></div>
<div class="a" style="left:252px;top:257px;width:278px;height:1px;background:#000"></div>
<div class="a" style="left:531px;top:257px;width:355px;height:1px;background:#D4D0C8"></div>
<div class="a t " style="left:271px;top:241.99px;font-size:11px;">454: Оригинал переводного издания</div>
<div class="a " style="left:252px;top:258px;width:278px;height:20px;background:#D4D0C8"></div>
<div class="a" style="left:252px;top:277px;width:278px;height:1px;background:#000"></div>
<div class="a" style="left:531px;top:277px;width:355px;height:1px;background:#D4D0C8"></div>
<div class="a t " style="left:271px;top:261.99px;font-size:11px;">920: Имя рабочего листа</div>
<div class="a t " style="left:533px;top:261.99px;font-size:11px;letter-spacing:-0.5px">SPEC</div>
<div class="a " style="left:252px;top:278px;width:278px;height:20px;background:#D4D0C8"></div>
<div class="a" style="left:252px;top:297px;width:278px;height:1px;background:#000"></div>
<div class="a" style="left:531px;top:297px;width:355px;height:1px;background:#D4D0C8"></div>
<div class="a t " style="left:271px;top:281.99px;font-size:11px;">900: Вид документа</div>
<div class="a t " style="left:533px;top:281.99px;font-size:11px;letter-spacing:-0.5px">^B03</div>
<div class="a" style="left:268px;top:138px;width:1px;height:160px;background:#000"></div>
<div class="a" style="left:509px;top:138px;width:1px;height:160px;background:#000"></div>
<div class="a" style="left:530px;top:138px;width:1px;height:160px;background:#000"></div>
<svg class="a" style="left:250px;top:420px" width="620" height="22" viewBox="0 0 620 22"><rect x="1" y="1.5" width="612" height="1" fill="#000"/><path d="M550 2.5 L547.2 14 Q546.7 18.5 550.5 18.5 L598.5 18.5 L602 2.5Z" fill="#fff" stroke="#000" stroke-width="1.2"/><path d="M455 2.5 L452.2 14 Q451.7 18.5 455.5 18.5 L545.5 18.5 L549 2.5Z" fill="#fff" stroke="#000" stroke-width="1.2"/><path d="M388 2.5 L385.2 14 Q384.7 18.5 388.5 18.5 L450.5 18.5 L454 2.5Z" fill="#fff" stroke="#000" stroke-width="1.2"/><path d="M343 2.5 L340.2 14 Q339.7 18.5 343.5 18.5 L383.5 18.5 L387 2.5Z" fill="#fff" stroke="#000" stroke-width="1.2"/><path d="M254 2.5 L251.2 14 Q250.7 18.5 254.5 18.5 L338.5 18.5 L342 2.5Z" fill="#fff" stroke="#000" stroke-width="1.2"/><path d="M178 2.5 L175.2 14 Q174.7 18.5 178.5 18.5 L249.5 18.5 L253 2.5Z" fill="#fff" stroke="#000" stroke-width="1.2"/><path d="M100 2.5 L97.2 14 Q96.7 18.5 100.5 18.5 L173.5 18.5 L177 2.5Z" fill="#fff" stroke="#000" stroke-width="1.2"/><path d="M64 2.5 L61.2 14 Q60.7 18.5 64.5 18.5 L95.5 18.5 L99 2.5Z" fill="#fff" stroke="#000" stroke-width="1.2"/><path d="M9.5 2.5 L14.5 18.5 L59.5 18.5 L63 2.5Z" fill="#D4D0C8" stroke="#000" stroke-width="1.2"/></svg>
<div class="a t " style="left:265px;top:425.29px;font-size:11px;">МН-общ.</div>
<div class="a t " style="left:317px;top:425.29px;font-size:11px;">Коды</div>
<div class="a t " style="left:353px;top:425.29px;font-size:11px;">Основное БО</div>
<div class="a t " style="left:431px;top:425.29px;font-size:11px;">Расширенное</div>
<div class="a t " style="left:507px;top:425.29px;font-size:11px;">Специфические</div>
<div class="a t " style="left:596px;top:425.29px;font-size:11px;">Экз-ры</div>
<div class="a t " style="left:641px;top:425.29px;font-size:11px;">Технология</div>
<div class="a t " style="left:708px;top:425.29px;font-size:11px;">Систематизация</div>
<div class="a t " style="left:803px;top:425.29px;font-size:11px;">Содерж.</div>
<div class="a " style="left:862px;top:425px;width:23px;height:13px;background:#000"></div>
<div class="a rz" style="left:863px;top:426px;width:10px;height:11px;"></div>
<div class="a" style="left:865px;top:428px;width:0;height:0;border-top:3px solid transparent;border-bottom:3px solid transparent;border-right:4px solid #808080"></div>
<div class="a rz" style="left:874px;top:426px;width:10px;height:11px;"></div>
<div class="a" style="left:877px;top:428px;width:0;height:0;border-top:3px solid transparent;border-bottom:3px solid transparent;border-left:4px solid #000"></div>
<div class="a " style="left:340px;top:128px;width:545px;height:114px;background:#fff;border:1px solid #000"></div>
<div class="a " style="left:341px;top:129px;width:527px;height:14px;background:#0A246A;outline:1px dotted #fff;outline-offset:-1px"></div>
<div class="a t " style="left:342px;top:130.86px;font-size:10.8px;color:#fff;letter-spacing:-0.15px">SPEC42 - Описание Спецификации Тома</div>
<div class="a t " style="left:343px;top:144.86px;font-size:10.8px;">OJ31 - Описание журнала и ввод сведений о ПЕРВОМ поступлении</div>
<div class="a t " style="left:343px;top:158.86px;font-size:10.8px;">ASP42 - Аналитическое описание статьи (полное)</div>
<div class="a t " style="left:343px;top:172.86px;font-size:10.8px;">AUNTD42 - Аналитическое описание юридического документа или НТД</div>
<div class="a t " style="left:343px;top:186.86px;font-size:10.8px;">PAZK71 - То же, что PAZK42, но с расширенной страницей &quot;Содержание&quot;</div>
<div class="a t " style="left:343px;top:200.86px;font-size:10.8px;">PVK71 - То же, что PVK42, но с расширенной страницей &quot;Содержание&quot;</div>
<div class="a t " style="left:343px;top:214.86px;font-size:10.8px;">SPEC71 - То же, что SPEC42, но с расширенной страницей &quot;Содержание&quot;</div>
<div class="a t " style="left:343px;top:228.86px;font-size:10.8px;">ASP71 - То же, что ASP42, но с расширенной страницей &quot;Содержание&quot;</div>
<div class="a dith" style="left:868px;top:129px;width:16px;height:111px;"></div>
<div class="a rz" style="left:868px;top:129px;width:16px;height:15px;"></div>
<div class="a arru" style="left:872px;top:134px"></div>
<div class="a rz" style="left:868px;top:157px;width:16px;height:44px;"></div>
<div class="a rz" style="left:868px;top:226px;width:16px;height:14px;"></div>
<div class="a arr" style="left:872px;top:231px"></div>
<svg class="a" style="left:325px;top:116px" width="72" height="38" viewBox="0 0 72 38"><ellipse cx="35.5" cy="18.6" rx="31" ry="13.6" fill="none" stroke="#e01010" stroke-width="3.2" transform="rotate(-3 35.5 18.6)"/></svg>
<div class="a" style="left:4px;top:446px;width:887px;height:1px;background:#fff"></div>
<div class="a " style="left:5px;top:449px;width:483px;height:185px;background:#fff;box-shadow:inset 1px 1px #808080,inset 2px 2px #404040,inset -1px -1px #fff,inset -2px -2px #D4D0C8"></div>
<div class="a " style="left:7px;top:451px;width:464px;height:18px;background:#D4D0C8;box-shadow:inset 1px 1px #fff"></div>
<div class="a" style="left:7px;top:469px;width:464px;height:1px;background:#000"></div>
<div class="a t " style="left:9px;top:454.69px;font-size:11px;">№</div>
<svg class="a" style="left:25px;top:452px" width="15" height="15" viewBox="0 0 15 15"><path d="M1 9 C2 7,4 8,5 10 C7 6,10 3,14 1 L14.5 2.5 C11 5,8 9,6 13.5 L4 13.5 C3 11,2 10,1 9Z" fill="#10a020"/></svg>
<div class="a " style="left:7px;top:470px;width:33px;height:18px;background:#D4D0C8;box-shadow:inset 1px 1px #fff"></div>
<div class="a" style="left:7px;top:488px;width:34px;height:1px;background:#000"></div>
<div class="a" style="left:41px;top:488px;width:430px;height:1px;background:#D4D0C8"></div>
<div class="a t " style="left:9px;top:473.89px;font-size:11px;">16</div>
<div class="a" style="left:41px;top:470px;width:430px;height:18px;overflow:hidden"><div class="a t" style="left:1px;top:3.72px;font-size:11.2px;">Зубов А.В. Компьютер. Windows. Программы [Электронный ресурс] / А. В. Зубов, М. В. Зубова</div></div>
<div class="a " style="left:7px;top:489px;width:33px;height:18px;background:#D4D0C8;box-shadow:inset 1px 1px #fff"></div>
<div class="a" style="left:7px;top:507px;width:34px;height:1px;background:#000"></div>
<div class="a" style="left:41px;top:507px;width:430px;height:1px;background:#D4D0C8"></div>
<div class="a t " style="left:9px;top:492.89px;font-size:11px;">17</div>
<div class="a" style="left:41px;top:489px;width:430px;height:18px;overflow:hidden"><div class="a t" style="left:1px;top:3.72px;font-size:11.2px;">Ньюман К. Освой самостоятельно PHP. 10 минут на урок [Текст] / К. Ньюман, 2006. - 256 с.</div></div>
<div class="a " style="left:7px;top:508px;width:33px;height:17px;background:#D4D0C8;box-shadow:inset 1px 1px #fff"></div>
<div class="a" style="left:7px;top:525px;width:34px;height:1px;background:#000"></div>
<div class="a" style="left:41px;top:525px;width:430px;height:1px;background:#D4D0C8"></div>
<div class="a t " style="left:9px;top:511.89px;font-size:11px;">18</div>
<div class="a" style="left:41px;top:508px;width:430px;height:17px;overflow:hidden"><div class="a t" style="left:1px;top:3.72px;font-size:11.2px;">Промышленный катализ в лекциях. Вып. 2 / ред. А. С. Носков, 2005</div></div>
<div class="a " style="left:7px;top:526px;width:33px;height:17px;background:#D4D0C8;box-shadow:inset 1px 1px #fff"></div>
<div class="a" style="left:7px;top:543px;width:34px;height:1px;background:#000"></div>
<div class="a" style="left:41px;top:543px;width:430px;height:1px;background:#D4D0C8"></div>
<div class="a t " style="left:9px;top:529.89px;font-size:11px;">19</div>
<div class="a" style="left:41px;top:526px;width:430px;height:17px;overflow:hidden"><div class="a t" style="left:1px;top:3.72px;font-size:11.2px;">Неразрушающий контроль : справочник в 8-ми т. / под ред. В. В. Клюева. Т. 2, 2006. - 688 с.</div></div>
<div class="a " style="left:7px;top:544px;width:33px;height:17px;background:#D4D0C8;box-shadow:inset 1px 1px #fff"></div>
<div class="a" style="left:7px;top:561px;width:34px;height:1px;background:#000"></div>
<div class="a" style="left:41px;top:561px;width:430px;height:1px;background:#D4D0C8"></div>
<div class="a t " style="left:9px;top:547.89px;font-size:11px;">20</div>
<div class="a" style="left:41px;top:544px;width:430px;height:17px;overflow:hidden"><div class="a t" style="left:1px;top:3.72px;font-size:11.2px;">Фонды и коллекции Санкт-Петербургского филиала Архива Российской Академии наук</div></div>
<div class="a " style="left:7px;top:562px;width:33px;height:17px;background:#D4D0C8;box-shadow:inset 1px 1px #fff"></div>
<div class="a" style="left:7px;top:579px;width:34px;height:1px;background:#000"></div>
<div class="a" style="left:41px;top:579px;width:430px;height:1px;background:#D4D0C8"></div>
<div class="a t " style="left:9px;top:565.89px;font-size:11px;">21</div>
<div class="a" style="left:41px;top:562px;width:430px;height:17px;overflow:hidden"><div class="a t" style="left:1px;top:3.72px;font-size:11.2px;">Экология [Текст] : учебник / В. Н. Большаков [и др.] ; под ред.: Г. В. Тягунова, Ю. Г. Ярошенко</div></div>
<div class="a " style="left:7px;top:580px;width:33px;height:17px;background:#D4D0C8;box-shadow:inset 1px 1px #fff"></div>
<div class="a" style="left:7px;top:597px;width:34px;height:1px;background:#000"></div>
<div class="a" style="left:41px;top:597px;width:430px;height:1px;background:#D4D0C8"></div>
<div class="a t " style="left:9px;top:583.89px;font-size:11px;">22</div>
<div class="a" style="left:41px;top:580px;width:430px;height:17px;overflow:hidden"><div class="a t" style="left:1px;top:3.72px;font-size:11.2px;">Курленя М.В. Техногенные геомеханические поля напряжений [Текст] / М. В. Курленя</div></div>
<div class="a " style="left:7px;top:598px;width:33px;height:17px;background:#D4D0C8;box-shadow:inset 1px 1px #fff"></div>
<div class="a" style="left:7px;top:615px;width:34px;height:1px;background:#000"></div>
<div class="a" style="left:41px;top:615px;width:430px;height:1px;background:#D4D0C8"></div>
<div class="a t " style="left:9px;top:601.89px;font-size:11px;">23</div>
<div class="a" style="left:41px;top:598px;width:430px;height:17px;overflow:hidden"><div class="a t" style="left:1px;top:3.72px;font-size:11.2px;">XXXI Дальневосточная математическая школа-семинар имени академика Е.В. Золотова</div></div>
<div class="a " style="left:7px;top:616px;width:33px;height:17px;background:#D4D0C8;box-shadow:inset 1px 1px #fff"></div>
<div class="a " style="left:41px;top:616px;width:430px;height:17px;background:#0A246A"></div>
<div class="a" style="left:41px;top:616px;width:430px;height:17px;overflow:hidden"><div class="a t" style="left:1px;top:3.72px;font-size:11.2px;color:#fff">(новый)</div></div>
<div class="a" style="left:23px;top:451px;width:1px;height:182px;background:#000"></div>
<div class="a" style="left:40px;top:451px;width:1px;height:182px;background:#000"></div>
<div class="a dith" style="left:471px;top:451px;width:16px;height:181px;"></div>
<div class="a rz" style="left:471px;top:451px;width:16px;height:16px;"></div>
<div class="a arru" style="left:475px;top:457px"></div>
<div class="a rz" style="left:471px;top:602px;width:16px;height:15px;"></div>
<div class="a rz" style="left:471px;top:617px;width:16px;height:15px;"></div>
<div class="a arr" style="left:475px;top:623px"></div>
<div class="a " style="left:491px;top:469px;width:399px;height:166px;box-shadow:inset 1px 1px #fff,inset -1px -1px #404040,inset -2px -2px #808080"></div>
<div class="a " style="left:595px;top:453px;width:136px;height:17px;box-shadow:inset 1px 1px #fff,inset -1px 0 #404040,inset -2px 0 #808080;background:#D4D0C8"></div>
<div class="a t " style="left:600px;top:455.77px;font-size:10.9px;">Связанные док-ты (НЕТ)</div>
<div class="a " style="left:492px;top:450px;width:104px;height:21px;box-shadow:inset 1px 1px #fff,inset -1px 0 #404040,inset -2px 0 #808080;background:#D4D0C8"></div>
<div class="a t " style="left:499px;top:454.44px;font-size:10.7px;">Полное описание</div>
<div class="a sk" style="left:496px;top:473px;width:391px;height:160px;"></div>
<div class="a t " style="left:500px;top:491.44px;font-size:10.7px;">. - [Б. м. : б. и.]. - Б. ц.</div>
<div class="a t " style="left:500px;top:504.93px;font-size:11.3px;font-weight:bold">Нет сведений об экземплярах</div>
<svg class="a" style="left:867px;top:451px" width="18" height="17" viewBox="0 0 18 17"><path d="M7 2 H13 V9 H7Z" fill="#fafafa" stroke="#c8c8d8" stroke-width="0.8"/><circle cx="9.5" cy="1.8" r="0.8" fill="#000"/><circle cx="11.5" cy="1.8" r="0.8" fill="#000"/><path d="M14 2 L16 4 M16 2 L14 4" stroke="#d01010" stroke-width="1.4"/><path d="M5 9 H17 V13 L11 15 L5 13Z" fill="#e8f0e8" stroke="#90a090" stroke-width="0.8"/><path d="M9 14.5 L13 12 L16 12" stroke="#303030" stroke-width="1"/><path d="M1.5 4.5 H6 L7.5 6 V12.5 H1.5Z" fill="#c8d8ff" stroke="#3050a0" stroke-width="0.9"/><path d="M3 7h3M3 9h3M3 11h2" stroke="#4060c0" stroke-width="0.9"/></svg>
<div class="a ts" style="left:4px;top:638px;width:165px;height:16px;"></div>
<div class="a" style="left:5px;top:639px;width:163px;height:14px;overflow:hidden"><div class="a t" style="left:2px;top:1.99px;font-size:11px;color:#000;letter-spacing:-0.3px">БД: IBIS Макс.MFN: 23</div></div>
<div class="a ts" style="left:170px;top:638px;width:139px;height:16px;"></div>
<div class="a" style="left:171px;top:639px;width:137px;height:14px;overflow:hidden"><div class="a t" style="left:2px;top:1.99px;font-size:11px;color:#000;letter-spacing:-0.3px">Текущий MFN: (новый)</div></div>
<div class="a ts" style="left:310px;top:638px;width:69px;height:16px;"></div>
<div class="a ts" style="left:380px;top:638px;width:89px;height:16px;"></div>
<div class="a" style="left:381px;top:639px;width:87px;height:14px;overflow:hidden"><div class="a t" style="left:2px;top:1.99px;font-size:11px;color:#008000;letter-spacing:0">Отмечено - 0</div></div>
<div class="a ts" style="left:470px;top:638px;width:356px;height:16px;"></div>
<div class="a" style="left:471px;top:639px;width:354px;height:14px;overflow:hidden"><div class="a t" style="left:2px;top:1.73px;font-size:11.3px;color:#800080;letter-spacing:0">и в &quot;Основные данные&quot; (&quot;Заголовок&quot; и &quot;Свед.об ответ-сти&quot;). Авторские знаки</div></div>
<div class="a ts" style="left:827px;top:638px;width:63px;height:16px;"></div>
<div class="a" style="left:828px;top:639px;width:61px;height:14px;overflow:hidden"><div class="a t" style="left:2px;top:2.33px;font-size:10.6px;color:#000;letter-spacing:0">12:23  00:04</div></div></body></html>
